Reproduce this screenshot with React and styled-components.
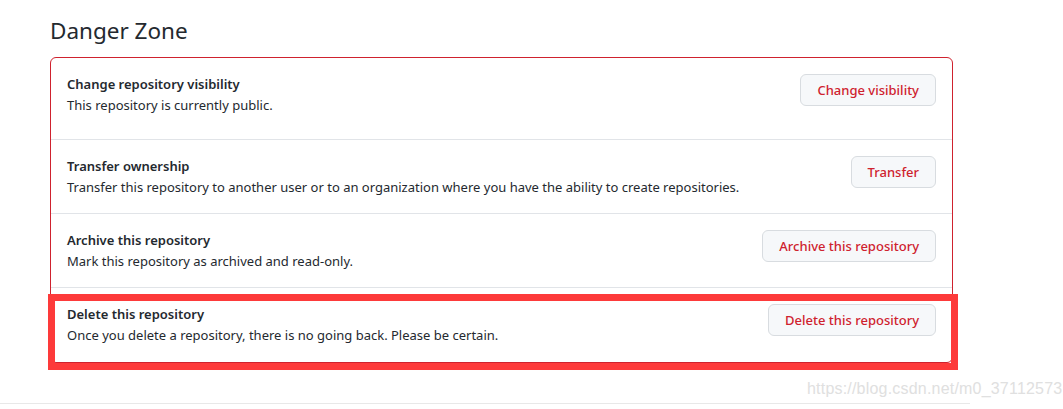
import React from "react";
import styled, { createGlobalStyle } from "styled-components";

const Global = createGlobalStyle`
  html, body { margin: 0; padding: 0; background: #fff; }
  body { font-family: "Noto Sans", "Open Sans", sans-serif; color: #24292f; }
`;

const Page = styled.div`
  position: relative;
  width: 1063px;
  height: 409px;
  overflow: hidden;
  background: #fff;
`;

const Section = styled.section`
  padding: 16px 0 0 50px;
  width: 903px;
`;

const Heading = styled.h2`
  margin: 0 0 11px;
  font-size: 22.5px;
  font-weight: 400;
  line-height: 30px;
  color: #24292f;
`;

const DangerBox = styled.div`
  position: relative;
  border: 1px solid #cf222e;
  border-radius: 6px;
`;

const Row = styled.div`
  display: flex;
  align-items: flex-start;
  justify-content: space-between;
  padding: 16px;
  border-top: 1px solid #e1e4e8;

  &:first-child {
    padding-bottom: 24px;
    border-top: none;
  }

  &:last-of-type {
    padding-bottom: 17px;
  }
`;

const Info = styled.div`
  display: flex;
  flex-direction: column;
`;

const Title = styled.div`
  font-size: 13px;
  font-weight: 600;
  line-height: 21px;
  color: #24292f;
`;

const Desc = styled.div`
  font-size: 13px;
  line-height: 20px;
  color: #24292f;
`;

const DangerButton = styled.button`
  flex: none;
  height: 32px;
  padding: 0 16px;
  border: 1px solid #d8dce0;
  border-radius: 6px;
  background: #f6f8fa;
  color: #cf222e;
  font-family: inherit;
  font-size: 13px;
  font-weight: 500;
  cursor: pointer;
`;

const Highlight = styled.span`
  position: absolute;
  left: -3px;
  right: -6px;
  bottom: -8px;
  height: 76px;
  border: 7px solid #fd3a3a;
  box-sizing: border-box;
  pointer-events: none;
`;

const FooterLine = styled.div`
  position: absolute;
  left: 0;
  top: 403px;
  width: 970px;
  border-top: 1px solid #e8e8e8;
`;

const Watermark = styled.div`
  position: absolute;
  left: 807px;
  top: 380px;
  font-family: "Liberation Sans", Arial, sans-serif;
  font-size: 16px;
  color: #e0e0e0;
  letter-spacing: 0.2px;
`;

const rows = [
  {
    title: "Change repository visibility",
    desc: "This repository is currently public.",
    action: "Change visibility",
  },
  {
    title: "Transfer ownership",
    desc:
      "Transfer this repository to another user or to an organization where you have the ability to create repositories.",
    action: "Transfer",
  },
  {
    title: "Archive this repository",
    desc: "Mark this repository as archived and read-only.",
    action: "Archive this repository",
  },
  {
    title: "Delete this repository",
    desc: "Once you delete a repository, there is no going back. Please be certain.",
    action: "Delete this repository",
  },
];

export default function App() {
  return (
    <Page>
      <Global />
      <Section>
        <Heading>Danger Zone</Heading>
        <DangerBox>
          {rows.map((r) => (
            <Row key={r.title}>
              <Info>
                <Title>{r.title}</Title>
                <Desc>{r.desc}</Desc>
              </Info>
              <DangerButton>{r.action}</DangerButton>
            </Row>
          ))}
          <Highlight />
        </DangerBox>
      </Section>
      <FooterLine />
      <Watermark>https://blog.csdn.net/m0_37112573</Watermark>
    </Page>
  );
}
